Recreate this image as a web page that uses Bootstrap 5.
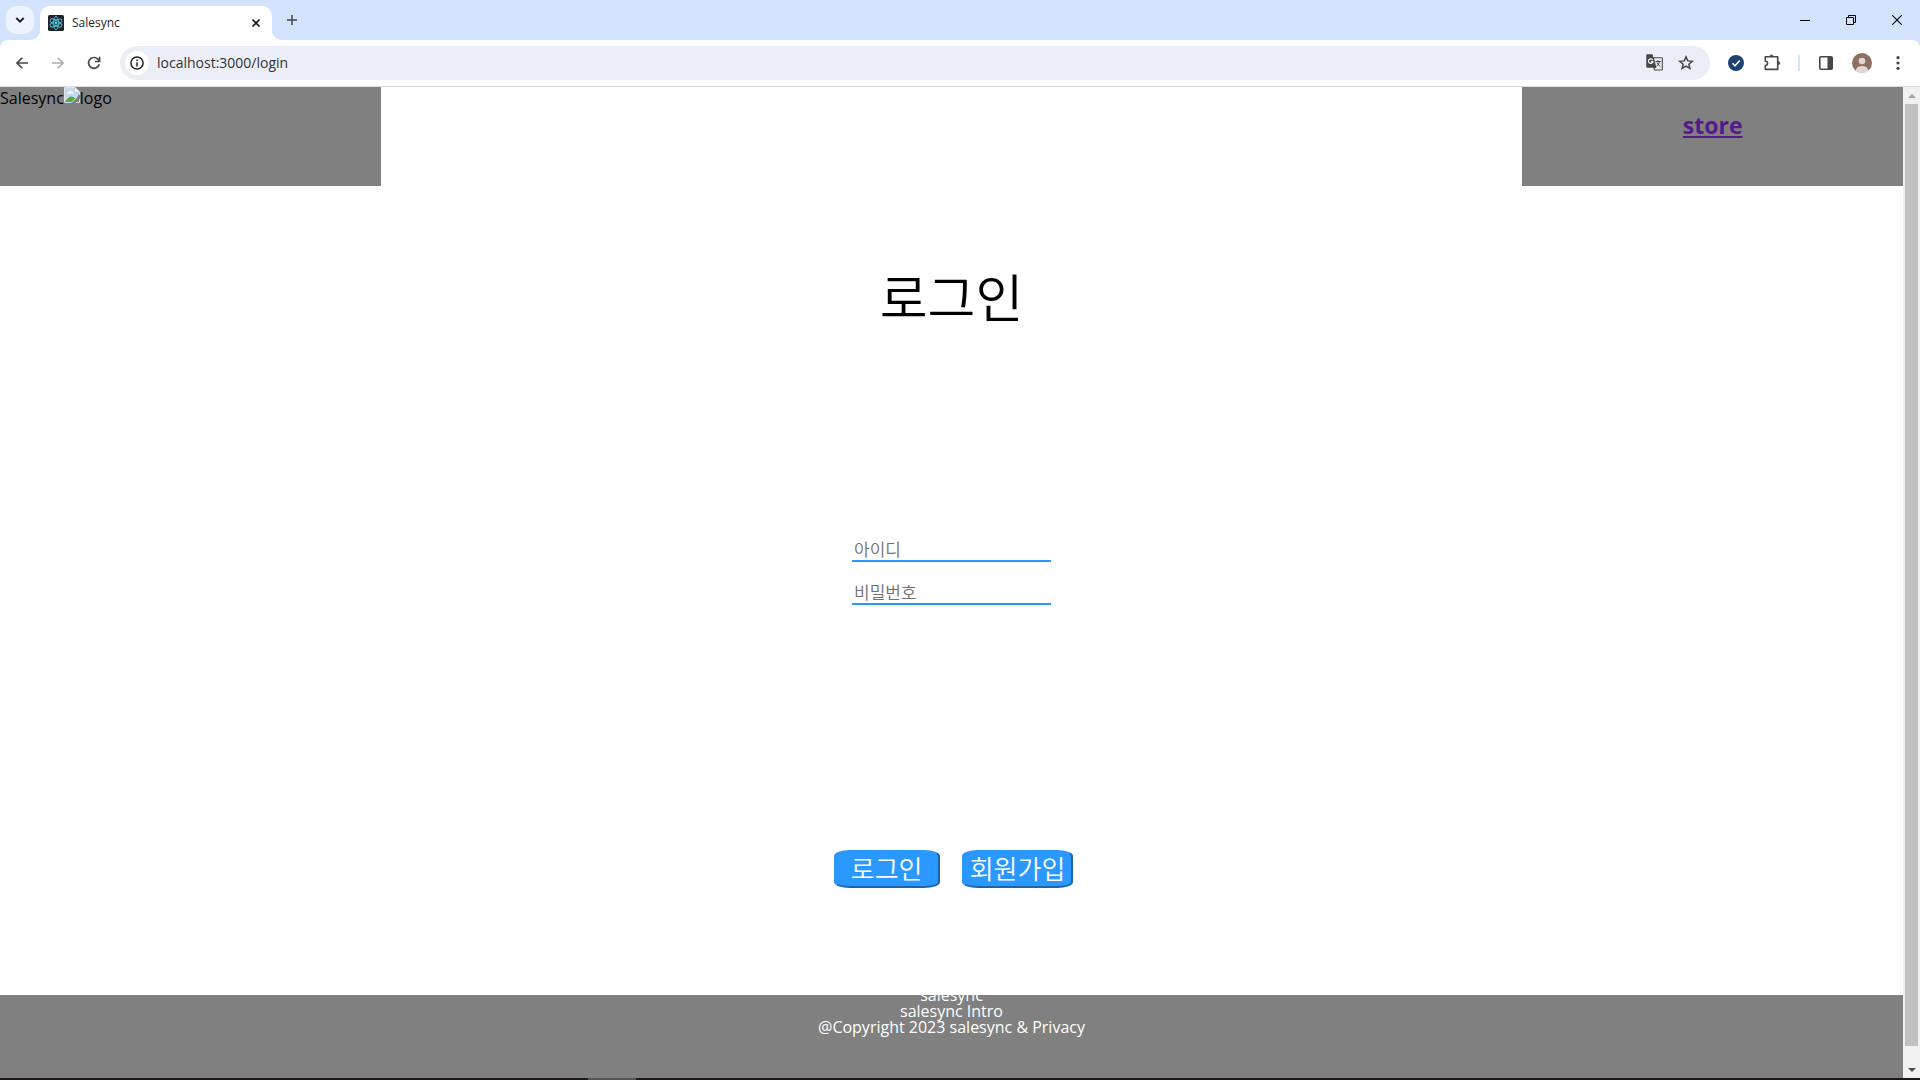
<!DOCTYPE html>
<html lang="ko">
<head>
<meta charset="utf-8">
<meta name="viewport" content="width=device-width, initial-scale=1">
<title>Salesync</title>
<link href="https://cdn.jsdelivr.net/npm/bootstrap@5.3.0/dist/css/bootstrap.min.css" rel="stylesheet">
<style>
  body { font-family: "Open Sans", "Noto Sans CJK KR", sans-serif; font-size: 16px; color: #000; }
  svg { display: block; flex: none; }
  button { border: 0; background: none; padding: 0; color: #1f1f1f; }
  .tab-strip { height: 40px; background: #d3e3fd; padding-left: 6px; }
  .tab-search { width: 28px; height: 28px; margin-top: 6px; border-radius: 10px; background: #ecf3fe; }
  .browser-tab { width: 232px; height: 34px; margin: 6px 0 0 6px; padding: 0 8px; background: #fff; border-radius: 10px 10px 0 0; font-size: 12px; line-height: 16px; color: #1f1f1f; }
  .browser-tab::before, .browser-tab::after { content: ""; position: absolute; bottom: 0; width: 10px; height: 10px; }
  .browser-tab::before { left: -10px; background: radial-gradient(circle at 0 0, transparent 10px, #fff 10px); }
  .browser-tab::after { right: -10px; background: radial-gradient(circle at 100% 0, transparent 10px, #fff 10px); }
  .tab-close { width: 16px; height: 28px; }
  .tab-new { width: 40px; height: 40px; }
  .win-btn { width: 46px; height: 40px; color: #000; }
  .toolbar-wrap { background: #d3e3fd; }
  .toolbar { height: 47px; padding: 0 4px 1px; background: #fff; border-bottom: 1px solid #dcdcdc; border-radius: 8px 8px 0 0; }
  .tool-btn { width: 36px; height: 34px; color: #474747; }
  .address { height: 34px; padding: 0 8px 0 5px; border-radius: 17px; background: #ebeef7; }
  .site-info { width: 24px; height: 24px; border-radius: 50%; background: #fff; }
  .address input { border: 0; outline: 0; background: none; padding: 0; color: #333; font-size: 14px; min-width: 0; }
  .address .tool-btn { width: 32px; }
  .tool-sep { width: 2px; height: 16px; background: #d3e3fd; }
  .site-cell { width: 20%; height: 99px; background: #808080; }
  .brand-text { line-height: 22px; }
  .store-link { font-size: 23px; line-height: 32px; padding-top: 22px; font-weight: 700; margin: 0; }
  .store-link a { color: #551a8b; text-underline-offset: 2px; text-decoration-thickness: 2px; }
  .login-title { margin: 70px 0 0; font-size: 52px; line-height: 80px; font-weight: 350; font-family: "Noto Sans CJK KR", sans-serif; }
  .fields { width: 199px; margin-top: 200px; gap: 17px; }
  .fields input { width: 100%; height: 26px; padding: 0 2px; border: 0; border-bottom: 2px solid #2a98ff; border-radius: 0; outline: 0; font-size: 17px; line-height: 24px; font-weight: 350; font-family: "Noto Sans CJK KR", sans-serif; }
  .fields input::placeholder { color: #707070; }
  .actions { margin-top: 245px; gap: 22px; }
  .action-btn { height: 38px; min-width: 106px; padding: 0 6px 2px; border: 2px solid; border-color: #2a98ff #1b65a9 #1b65a9 #2a98ff; border-radius: 16px / 6px; background: #2a98ff; color: #fff; font-size: 26px; line-height: 32px; font-weight: 350; font-family: "Noto Sans CJK KR", sans-serif; }
  .site-footer { height: 83px; background: #808080; color: #fff; line-height: 16px; }
  .footer-lines { margin-top: -8px; }
  .scroll-rail { width: 17px; background: #f1f1f1; }
  .scroll-end { height: 17px; }
  .scroll-thumb { width: 13px; background: #c1c1c1; margin-bottom: 15px; }
  .taskbar-edge { height: 2px; background: #1a1719; padding-left: 588px; }
  .taskbar-edge span { width: 48px; background: #555; }
</style>
<script src="https://cdn.jsdelivr.net/npm/bootstrap@5.3.0/dist/js/bootstrap.bundle.min.js"></script>
</head>
<body class="d-flex flex-column min-vh-100">

<div class="tab-strip d-flex">
  <button class="tab-search d-flex align-items-center justify-content-center" aria-label="Search tabs">
    <svg width="10" height="8" viewBox="0 0 10 8" fill="none" stroke="currentColor" stroke-width="2"><path d="M1.3 2 5 5.6 8.7 2"/></svg>
  </button>
  <div class="browser-tab position-relative d-flex align-items-center">
    <svg width="16" height="16" viewBox="0 0 16 16"><rect width="16" height="16" rx="1.5" fill="#20232a"/><g fill="none" stroke="#53bfdc" stroke-width=".9"><ellipse cx="8" cy="8" rx="6.6" ry="2.6" transform="rotate(90 8 8)"/><ellipse cx="8" cy="8" rx="6.6" ry="2.6" transform="rotate(30 8 8)"/><ellipse cx="8" cy="8" rx="6.6" ry="2.6" transform="rotate(150 8 8)"/></g><circle cx="8" cy="8" r="1.4" fill="#61dafb"/></svg>
    <span class="ms-2 flex-grow-1">Salesync</span>
    <button class="tab-close d-flex align-items-center justify-content-center" aria-label="Close tab">
      <svg width="8" height="8" viewBox="0 0 8 8" stroke="currentColor" stroke-width="1.6"><path d="M.5.5l7 7M7.5.5l-7 7"/></svg>
    </button>
  </div>
  <button class="tab-new d-flex align-items-center justify-content-center" aria-label="New tab">
    <svg width="10" height="10" viewBox="0 0 10 10" stroke="#474747" stroke-width="1.5"><path d="M5 0v10M0 5h10"/></svg>
  </button>
  <div class="d-flex ms-auto">
    <button class="win-btn d-flex align-items-center justify-content-center" aria-label="Minimize"><svg width="10" height="10" viewBox="0 0 10 10" stroke="currentColor"><path d="M0 5.5h10"/></svg></button>
    <button class="win-btn d-flex align-items-center justify-content-center" aria-label="Restore"><svg width="10" height="10" viewBox="0 0 10 10" fill="none" stroke="currentColor"><path d="M.5 2.5h7v7h-7zM2.5 2.500v-2h7v7h-2"/></svg></button>
    <button class="win-btn d-flex align-items-center justify-content-center" aria-label="Close"><svg width="10" height="10" viewBox="0 0 10 10" stroke="currentColor" stroke-width="1.1"><path d="M0 0l10 10M10 0 0 10"/></svg></button>
  </div>
</div>

<div class="toolbar-wrap">
<div class="toolbar d-flex align-items-center">
  <button class="tool-btn d-flex align-items-center justify-content-center" aria-label="Back"><svg width="12" height="12" viewBox="0 0 12 12" fill="none" stroke="currentColor" stroke-width="1.6"><path d="M12 6H1M6.300.700 1 6l5.300 5.300"/></svg></button>
  <button class="tool-btn d-flex align-items-center justify-content-center" aria-label="Forward"><svg width="12" height="12" viewBox="0 0 12 12" fill="none" stroke="#adadad" stroke-width="1.6"><path d="M0 6h11M5.700.700 11 6l-5.300 5.300"/></svg></button>
  <button class="tool-btn d-flex align-items-center justify-content-center" aria-label="Reload"><svg width="14" height="14" viewBox="0 0 14 14" fill="none" stroke="currentColor" stroke-width="1.7"><path d="M12.200 8.200A5.400 5.400 0 1 1 10.900 3.200L12.500 5"/><path d="M12.600.800v4.700H8"/></svg></button>
  <div class="address d-flex align-items-center flex-grow-1 mx-2">
    <button class="site-info d-flex align-items-center justify-content-center" aria-label="Site information"><svg width="14" height="14" viewBox="0 0 14 14" fill="none" stroke="#1f1f1f" stroke-width="1.500"><circle cx="7" cy="7" r="6.100"/><path d="M7 6.200v4.300M7 3.500v1.600"/></svg></button>
    <input class="flex-grow-1 ms-2" type="text" value="localhost:3000/login" aria-label="Address">
    <button class="tool-btn d-flex align-items-center justify-content-center" aria-label="Translate"><svg width="17" height="17" viewBox="0 0 17 17"><path fill="#474747" d="M1 .5h5.500l3.200 13H1.500Q.5 13.500.5 12.500V1.500Q.5.500 1 .5z"/><path d="M7.300 3.700h8.200q.8 0 .8.800v10.700q0 .8-.8.800H8.700l-1-2.500h2z" fill="#ebeef7" stroke="#474747" stroke-width="1.100"/><path fill="#474747" d="M1 .5h5.500l1 3.200 2.400 9.800H1.500Q.5 13.500.5 12.500V1.500Q.5.500 1 .5z"/><path d="M6.700 5.900A2.300 2.300 0 1 0 7 7.600H4.900" fill="none" stroke="#fff" stroke-width="1.200"/><path d="M9.500 7.500h5.300M12 6.200v1.300M13.600 7.600q-.8 2.900-3 4.700M11 8.500q1 2.600 3.200 4" fill="none" stroke="#474747" stroke-width="1"/></svg></button>
    <button class="tool-btn d-flex align-items-center justify-content-center" aria-label="Bookmark this page"><svg width="16" height="16" viewBox="0 0 16 16" fill="none" stroke="currentColor" stroke-width="1.500"><path d="m8 1.900 1.800 4 4.400.4-3.300 2.900 1 4.300L8 11.200l-3.900 2.300 1-4.300-3.300-2.900 4.400-.4z"/></svg></button>
  </div>
  <button class="tool-btn d-flex align-items-center justify-content-center" aria-label="Verified extension"><svg width="16" height="16" viewBox="0 0 16 16"><circle cx="8" cy="8" r="8" fill="#1c4470"/><path d="m4.500 8.300 2.500 2.500 4.800-5.300" fill="none" stroke="#fff" stroke-width="1.500"/></svg></button>
  <button class="tool-btn d-flex align-items-center justify-content-center" aria-label="Extensions"><svg width="18" height="18" viewBox="0 0 18 18" fill="none" stroke="currentColor" stroke-width="1.600" stroke-linejoin="round"><path d="M2.300 2.800h12.400v12.600H2.300v-3.800q2.300-.4 2.300-2.300T2.300 7z"/><path d="M7 2.400q0-1.500 1.500-1.500T10 2.400zM15.200 7.600q1.600 0 1.600 1.500t-1.600 1.500z" fill="currentColor" stroke-width=".8"/></svg></button>
  <span class="tool-sep mx-2"></span>
  <button class="tool-btn d-flex align-items-center justify-content-center" aria-label="Side panel"><svg width="14" height="14" viewBox="0 0 14 14"><rect x=".8" y=".8" width="12.400" height="12.400" rx="1" fill="none" stroke="#474747" stroke-width="1.600"/><path d="M8.500 1H13v12H8.500z" fill="#474747"/></svg></button>
  <button class="tool-btn d-flex align-items-center justify-content-center" aria-label="Profile"><svg width="20" height="20" viewBox="0 0 20 20"><circle cx="10" cy="10" r="10" fill="#8d6e63"/><circle cx="10" cy="8" r="3.300" fill="#e0d6d3"/><path d="M3.700 17.700Q4.200 13 10 13t6.300 4.700A10 10 0 0 1 3.700 17.700z" fill="#e0d6d3"/></svg></button>
  <button class="tool-btn d-flex align-items-center justify-content-center" aria-label="Menu"><svg width="4" height="14" viewBox="0 0 4 14" fill="#474747"><circle cx="2" cy="1.700" r="1.600"/><circle cx="2" cy="7" r="1.600"/><circle cx="2" cy="12.300" r="1.600"/></svg></button>
</div>
</div>

<div class="d-flex flex-grow-1 bg-white">
  <div class="d-flex flex-column flex-grow-1">
    <header class="d-flex justify-content-between">
      <div class="site-cell d-flex align-items-start brand-text">
        <span>Salesync</span>
        <svg width="16" height="16" viewBox="0 0 16 16" role="img" aria-label="logo"><path d="M1 0h10l4 4v3l-5 9H1z" fill="#c4d7f5"/><path d="M.5 15.500V.5h10.300M15.500 5v3" fill="none" stroke="#e4e4e4"/><path d="M10.500 0v5H16z" fill="#fff" stroke="#c7c7c7" stroke-width=".7"/><path d="M3 6.500q0-1.800 1.800-1.500Q6 2.300 8 4.500q1.500 0 1.500 2z" fill="#fff"/><path d="M1 15q3.500-6 7-5.500l3.200 1.800L7.500 15z" fill="#53ac35"/><path d="m7.300 16 8.700-7.800V11l-5.500 5z" fill="#808080"/><path d="M12 15.500h3.500V12" fill="none" stroke="#ddd"/></svg>
        <span>logo</span>
      </div>
      <div class="site-cell text-center">
        <h2 class="store-link"><a href="#store">store</a></h2>
      </div>
    </header>

    <main class="flex-grow-1 d-flex flex-column align-items-center">
      <h1 class="login-title">로그인</h1>
      <form class="d-flex flex-column align-items-center">
        <div class="fields d-flex flex-column">
          <input type="text" placeholder="아이디" aria-label="아이디">
          <input type="password" placeholder="비밀번호" aria-label="비밀번호">
        </div>
        <div class="actions d-flex ps-1">
          <button class="action-btn" type="submit">로그인</button>
          <button class="action-btn" type="button">회원가입</button>
        </div>
      </form>
    </main>

    <footer class="site-footer overflow-hidden text-center">
      <div class="footer-lines">
        <div>salesync</div>
        <div>salesync Intro</div>
        <div>@Copyright 2023 salesync &amp; Privacy</div>
      </div>
    </footer>
  </div>
  <div class="scroll-rail d-flex flex-column align-items-center flex-shrink-0" aria-hidden="true">
    <div class="scroll-end d-flex align-items-center"><svg width="8" height="4" viewBox="0 0 8 4"><path d="M0 4h8L4 0z" fill="#a3a3a3"/></svg></div>
    <div class="scroll-thumb flex-grow-1"></div>
    <div class="scroll-end d-flex align-items-center"><svg width="8" height="4" viewBox="0 0 8 4"><path d="M0 0h8L4 4z" fill="#505050"/></svg></div>
  </div>
</div>
<div class="taskbar-edge d-flex"><span></span></div>
</body>
</html>
